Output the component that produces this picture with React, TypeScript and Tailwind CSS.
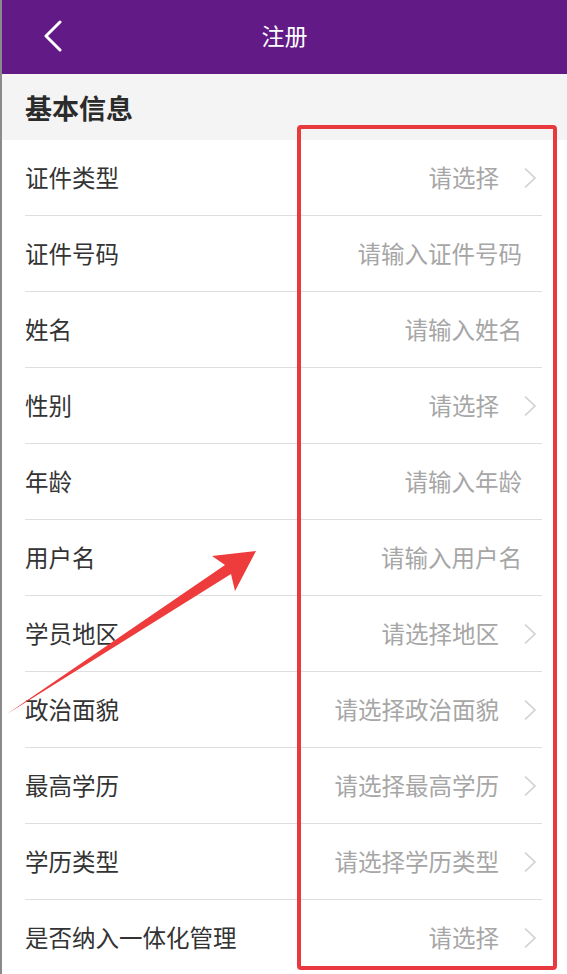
import React from 'react';

type Field = { label: string; placeholder: string; select: boolean };

const fields: Field[] = [
  { label: '证件类型', placeholder: '请选择', select: true },
  { label: '证件号码', placeholder: '请输入证件号码', select: false },
  { label: '姓名', placeholder: '请输入姓名', select: false },
  { label: '性别', placeholder: '请选择', select: true },
  { label: '年龄', placeholder: '请输入年龄', select: false },
  { label: '用户名', placeholder: '请输入用户名', select: false },
  { label: '学员地区', placeholder: '请选择地区', select: true },
  { label: '政治面貌', placeholder: '请选择政治面貌', select: true },
  { label: '最高学历', placeholder: '请选择最高学历', select: true },
  { label: '学历类型', placeholder: '请选择学历类型', select: true },
  { label: '是否纳入一体化管理', placeholder: '请选择', select: true },
];

const Chevron = () => (
  <svg width="14" height="22" viewBox="0 0 14 22" className="ml-[24px] mr-[5px] shrink-0">
    <path d="M2 1.5 L12 11 L2 20.5" fill="none" stroke="#cfcfcf" strokeWidth="1.6" />
  </svg>
);

const FormRow = ({ field }: { field: Field }) => (
  <div className="ml-[23px] mr-[25px] h-[76px] shrink-0 flex items-center justify-between border-b border-[#dedede]">
    <span className="text-[23.5px] text-[#333333] leading-none">{field.label}</span>
    <div className="flex items-center">
      <span className={`text-[23.5px] text-[#a6a6a6] leading-none ${field.select ? '' : 'mr-[20px]'}`}>{field.placeholder}</span>
      {field.select && <Chevron />}
    </div>
  </div>
);

export default function App() {
  return (
    <div className="w-[567px] h-[974px] relative overflow-hidden bg-white flex flex-col border-l-2 border-[#8a8a8a] font-['Noto_Sans_CJK_SC','Noto_Sans',sans-serif]">
      {/* 顶部导航 */}
      <div className="h-[74px] shrink-0 bg-[#611a86] flex items-center relative">
        <svg width="20" height="32" viewBox="0 0 20 32" className="ml-[41px] -mt-[2px]">
          <path d="M17 2 L3 16 L17 30" fill="none" stroke="#ffffff" strokeWidth="3" strokeLinecap="round" strokeLinejoin="round" />
        </svg>
        <span className="absolute left-0 right-0 -mt-[3px] text-center text-white text-[23px] leading-none pointer-events-none">注册</span>
      </div>

      {/* 分组标题 */}
      <div className="h-[66px] shrink-0 bg-[#f4f4f4] flex items-center px-[23px]">
        <span className="text-[27px] font-bold text-[#2b2b2b] leading-none">基本信息</span>
      </div>

      {fields.map((f) => (
        <FormRow key={f.label} field={f} />
      ))}

      {/* 标注 */}
      <div className="absolute left-[295px] top-[125px] w-[260px] h-[845px] border-4 border-[#e8393f] rounded-[4px] pointer-events-none"></div>
      <svg className="absolute left-0 top-0 pointer-events-none" width="567" height="974" viewBox="0 0 567 974">
        <polygon points="5,714 223,565 210,556 254,551 233,591 229,574" fill="#ee3b3b" />
      </svg>
    </div>
  );
}
